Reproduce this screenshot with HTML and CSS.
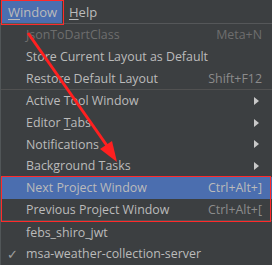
FILE: index.html
```html
<!DOCTYPE html>
<html>
<head>
<meta charset="utf-8">
<link rel="stylesheet" href="styles.css">
</head>
<body>
<div class="screen">
  <div class="menubar">
    <span class="top active"><u>W</u>indow</span>
    <span class="top"><u>H</u>elp</span>
  </div>
  <div class="popup">
    <div class="item disabled"><span class="label">JsonToDartClass</span><span class="key">Meta+N</span></div>
    <div class="item"><span class="label">Store Current Layout as Default</span></div>
    <div class="item"><span class="label">Restore Default Layout</span><span class="key">Shift+F12</span></div>
    <div class="sep"></div>
    <div class="item"><span class="label">Active Tool Window</span><span class="arrow"></span></div>
    <div class="item"><span class="label">Editor <u>T</u>abs</span><span class="arrow"></span></div>
    <div class="item"><span class="label">Notifications</span><span class="arrow"></span></div>
    <div class="item"><span class="label">Background Tasks</span><span class="arrow"></span></div>
    <div class="item selected"><span class="label">Next Project Window</span><span class="key">Ctrl+Alt+]</span></div>
    <div class="item"><span class="label">Previous Project Window</span><span class="key">Ctrl+Alt+[</span></div>
    <div class="sep"></div>
    <div class="item"><span class="label">febs_shiro_jwt</span></div>
    <div class="item"><span class="check">✓</span><span class="label">msa-weather-collection-server</span></div>
  </div>
  <div class="box box-top"></div>
  <div class="box box-bottom"></div>
  <svg class="arrow-ann" width="272" height="265" viewBox="0 0 272 265">
    <line x1="28" y1="33" x2="110" y2="150" stroke="#ff2020" stroke-width="3"/>
    <polygon points="117,162 100,149 112,141" fill="#ff2020"/>
  </svg>
</div>
</body>
</html>
```
FILE: styles.css
```css
html, body { margin: 0; padding: 0; background: #3c3f41; }
.screen {
  position: relative;
  width: 272px;
  height: 265px;
  overflow: hidden;
  background: #3c3f41;
  font-family: "Open Sans", "Noto Sans", sans-serif;
  font-size: 12.4px;
  color: #bbbbbb;
}
.menubar {
  display: flex;
  height: 23px;
  align-items: stretch;
  padding-left: 2px;
  border-bottom: 1px solid #555759;
  font-size: 13px;
}
.top {
  display: flex;
  align-items: center;
  padding: 0 6px;
}
.top.active { background: #4b6eaf; width: 48px; padding: 0 6px 0 6px; color: #bbbbbb; }
.top + .top { padding-left: 7px; }
u { text-decoration: underline; text-underline-offset: 2px; }
.popup {
  border-left: 1px solid #515658;
  display: flex;
  flex-direction: column;
}
.item {
  position: relative;
  display: flex;
  align-items: center;
  height: 21.7px;
  flex: none;
  padding-left: 25px;
  padding-right: 10px;
}
.item .label { flex: 1; white-space: nowrap; }
.item .key { color: #8c8c8c; white-space: nowrap; }
.item.disabled .label { color: #6e6e6e; }
.item.disabled .key { color: #6e6e6e; }
.item.selected { background: #4b6eaf; }
.item.selected .key { color: #bbbbbb; }
.sep { height: 1px; flex: none; background: #515151; margin: 0; }
.arrow {
  width: 0; height: 0;
  border-left: 5px solid #c8c8c8;
  border-top: 4px solid transparent;
  border-bottom: 4px solid transparent;
  margin-right: 3px;
}
.check { position: absolute; left: 6px; color: #a0a0a0; font-size: 13px; }
.box { position: absolute; border: 1px solid #ff2a2a; pointer-events: none; }
.box-top { left: 1px; top: 0; width: 61px; height: 23px; }
.box-bottom { left: 1px; top: 176px; width: 268px; height: 44px; }
.arrow-ann { position: absolute; left: 0; top: 0; }
```
